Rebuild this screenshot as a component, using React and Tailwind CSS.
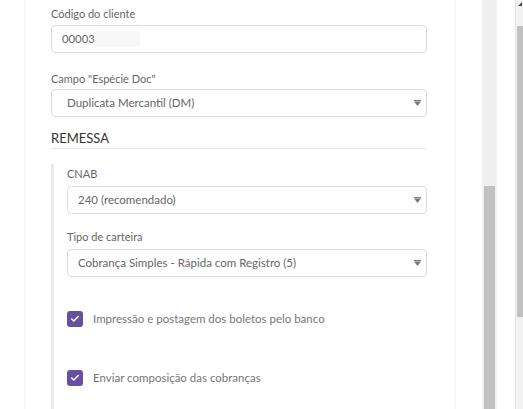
import { Check } from "lucide-react"

const font = { fontFamily: "Lato, 'Open Sans', sans-serif" }

function Arrow() {
  return (
    <svg width="7" height="6" viewBox="0 0 7 6" className="shrink-0">
      <rect x="0" y="0" width="7" height="1" fill="#777" />
      <path d="M0 1.5 L7 1.5 L3.5 6 Z" fill="#777" />
    </svg>
  )
}

function Select({ value, pad = "pl-[15px]" }) {
  return (
    <div className={`h-[28px] border border-[#dedede] rounded-[4px] bg-white flex items-center justify-between ${pad} pr-[5px]`}>
      <span className="text-[11.5px] text-[#666] leading-none">{value}</span>
      <Arrow />
    </div>
  )
}

function CheckRow({ label }) {
  return (
    <div className="flex items-center gap-[10px] h-[16px]">
      <div className="w-[16px] h-[16px] rounded-[3px] bg-[#67509f] flex items-center justify-center">
        <Check className="w-[10px] h-[10px] text-white" strokeWidth={3.5} />
      </div>
      <span className="text-[11.5px] text-[#777] leading-none">{label}</span>
    </div>
  )
}

export default function App() {
  return (
    <div className="w-[523px] h-[409px] overflow-hidden bg-white flex" style={font}>
      <div className="w-[24px] shrink-0" />
      <div className="w-[432px] shrink-0 border-l border-r border-[#f4f4f4] pl-[26px] pr-[28px]">
        <div className="pt-[5px] text-[11px] leading-[18px] text-[#666] mb-[2px]">Código do cliente</div>
        <div className="h-[28px] border border-[#dedede] rounded-[4px] flex items-center pl-[10px]">
          <span className="text-[11.3px] text-[#666] leading-none">00003</span>
          <span className="w-[45px] h-[16px] bg-[#f8f8f8]" />
        </div>

        <div className="mt-[17px] mb-[1px] text-[11px] leading-[18px] text-[#666]">Campo "Espécie Doc"</div>
        <Select value="Duplicata Mercantil (DM)" />

        <div className="mt-[12px] text-[13px] leading-[19px] text-[#333] border-b border-[#e6e6e6]">REMESSA</div>

        <div className="mt-[15px] border-l-[3px] border-[#ebebeb] pl-[13px] h-[260px]">
          <div className="pt-[1px] text-[11px] leading-[18px] text-[#666] mb-[3px]">CNAB</div>
          <Select value="240 (recomendado)" pad="pl-[10px]" />

          <div className="mt-[14px] mb-[3px] text-[11px] leading-[18px] text-[#666]">Tipo de carteira</div>
          <Select value="Cobrança Simples - Rápida com Registro (5)" pad="pl-[10px]" />

          <div className="mt-[34px] flex flex-col gap-[43px]">
            <CheckRow label="Impressão e postagem dos boletos pelo banco" />
            <CheckRow label="Enviar composição das cobranças" />
          </div>
        </div>
      </div>

      <div className="w-[26px] shrink-0" />
      <div className="w-[15px] shrink-0 bg-[#efefef] pt-[186px] px-[2px]">
        <div className="h-full bg-[#c1c1c1]" />
      </div>
      <div className="w-[18px] shrink-0" />
      <div className="w-[8px] shrink-0 bg-[#f1f1f1] border-l border-[#e3e3e3] flex flex-col">
        <div className="h-[26px] flex justify-center pt-[2px]">
          <svg width="4" height="4" viewBox="0 0 4 4">
            <path d="M0 4 L4 4 L4 0 Z" fill="#444" />
          </svg>
        </div>
        <div className="h-[291px] bg-[#c1c1c1] ml-[1px]" />
      </div>
    </div>
  )
}
